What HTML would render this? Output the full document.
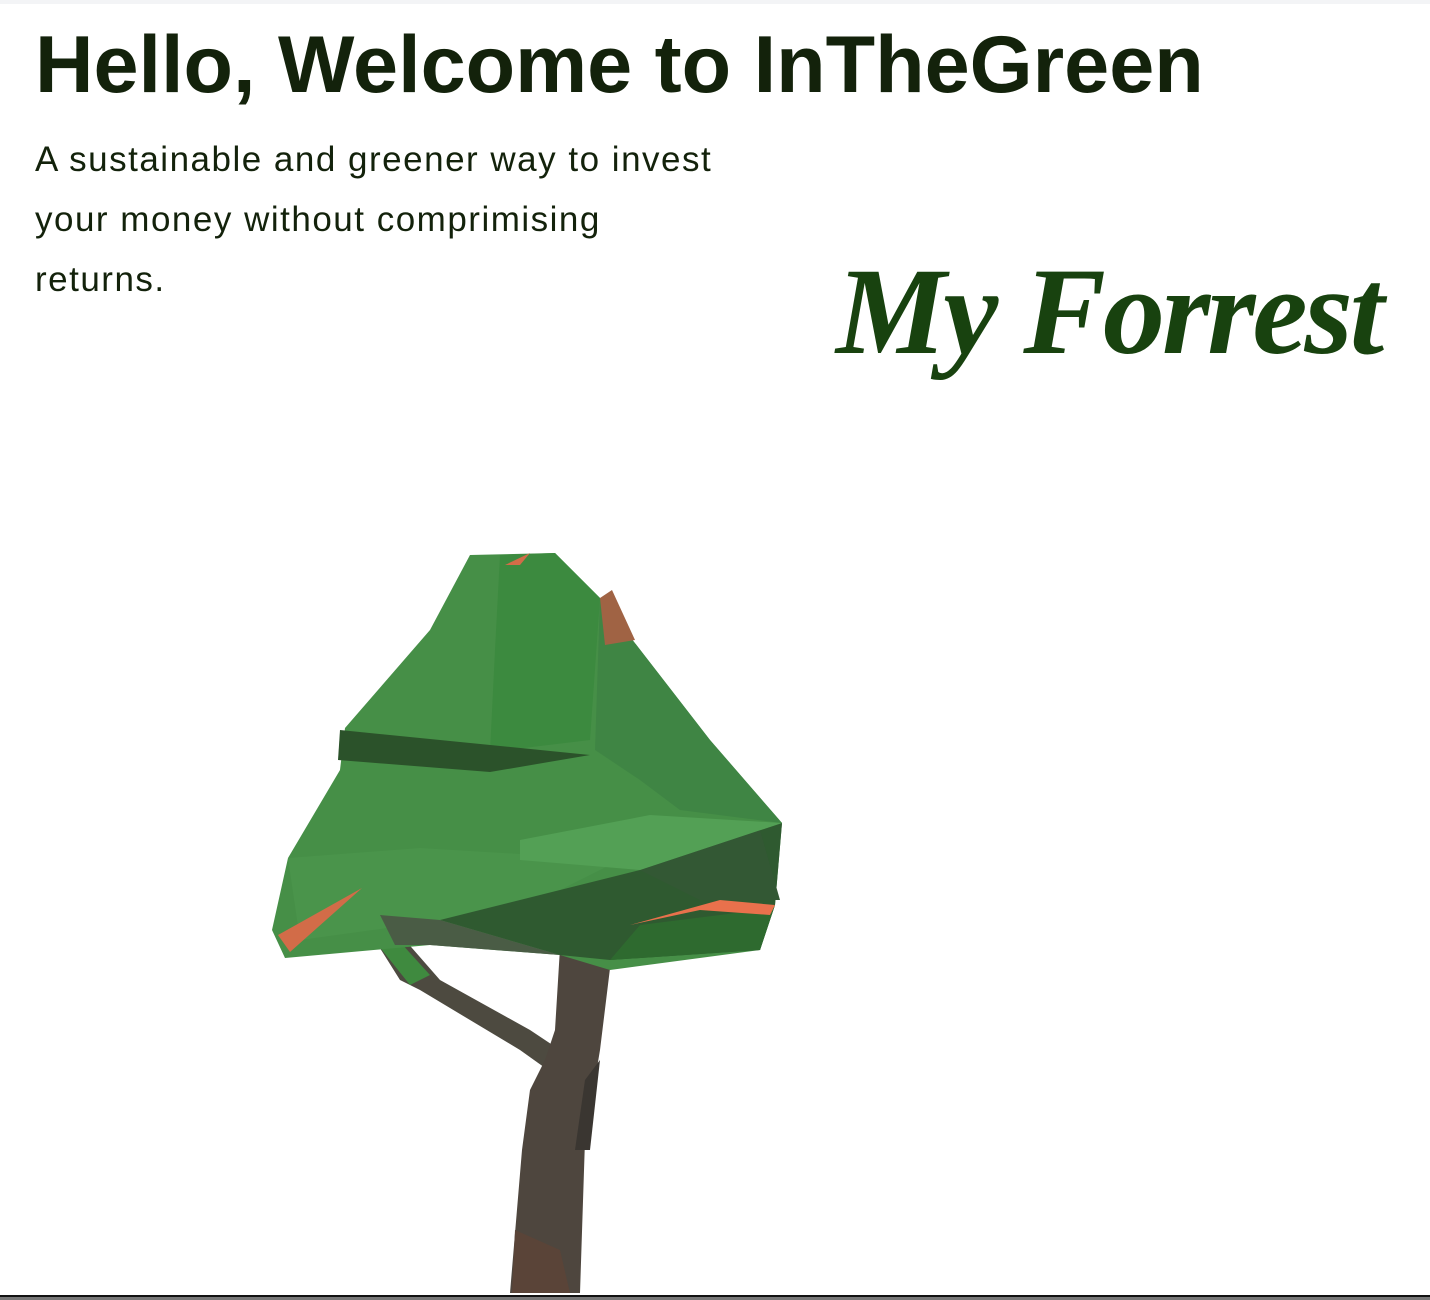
<!DOCTYPE html>
<html><head><meta charset="utf-8"><style>
html,body{margin:0;padding:0;background:#fff;width:1430px;height:1300px;overflow:hidden;position:relative}
.topbar{position:absolute;left:0;top:0;width:1430px;height:4px;background:#f3f4f6}
h1{position:absolute;left:35px;top:20px;margin:0;font:bold 81px/90px "Liberation Sans",sans-serif;color:#13220b;white-space:nowrap;letter-spacing:0px}
p{position:absolute;left:35px;top:130px;margin:0;width:700px;font:35px/60px "Liberation Sans",sans-serif;color:#13220b;letter-spacing:1.5px}
.my{position:absolute;left:836px;top:242px;font:bold italic 124px/140px "Liberation Serif",serif;color:#18420f;white-space:nowrap;letter-spacing:-3px}
.b1{position:absolute;left:0;top:1295px;width:1430px;height:2px;background:#111}
.b2{position:absolute;left:0;top:1297px;width:1430px;height:3px;background:#777}
svg{position:absolute;left:0;top:0}
</style></head><body>
<div class="topbar"></div>
<h1>Hello, Welcome to InTheGreen</h1>
<p>A sustainable and greener way to invest your money without comprimising returns.</p>
<div class="my">My Forrest</div>
<svg width="1430" height="1300" viewBox="0 0 1430 1300">
<polygon points="378,945 405,940 440,980 530,1030 560,1050 555,1075 520,1050 420,990 400,980" fill="#4d4a40"/>
<polygon points="378,945 400,942 430,975 410,985" fill="#3f8a3f"/>
<polygon points="560,948 612,952 600,1050 585,1140 580,1293 510,1293 522,1150 530,1090 545,1060 555,1030" fill="#4e463e"/>
<polygon points="585,1080 600,1060 590,1150 575,1150" fill="#3a3631"/>
<polygon points="515,1230 560,1250 570,1293 512,1293" fill="#5a4438"/>
<polygon points="470,555 555,553 600,598 710,740 782,823 775,905 760,950 610,970 560,955 430,945 285,958 272,930 288,858 340,770 345,728 430,630" fill="#468f47"/>
<polygon points="500,555 555,553 600,598 590,740 490,752 495,650" fill="#3c8a3f"/>
<polygon points="600,598 710,740 782,823 680,810 640,780 595,750" fill="#3f8544"/>
<polygon points="340,730 590,755 490,772 338,760" fill="#2b522a"/>
<polygon points="288,858 420,848 620,860 560,890 445,920 300,940" fill="#4a944b"/>
<polygon points="440,920 640,870 782,823 775,905 760,950 610,960 560,955" fill="#2f5a30"/>
<polygon points="640,870 760,830 780,900 700,900" fill="#335834"/>
<polygon points="380,915 440,920 560,955 430,945 395,945" fill="#4a5c45"/>
<polygon points="610,960 640,925 760,910 775,905 760,950" fill="#2e6a2f"/>
<polygon points="520,840 650,815 782,823 640,870 520,860" fill="#53a055"/>
<polygon points="600,598 612,590 635,640 605,645" fill="#a06344"/>
<polygon points="278,935 362,888 290,952" fill="#d26c48"/>
<polygon points="630,925 720,900 775,905 770,915 700,910" fill="#e9714c"/>
<polygon points="505,565 530,553 520,565" fill="#d26c48"/>
</svg>
<div class="b1"></div><div class="b2"></div>
</body></html>
